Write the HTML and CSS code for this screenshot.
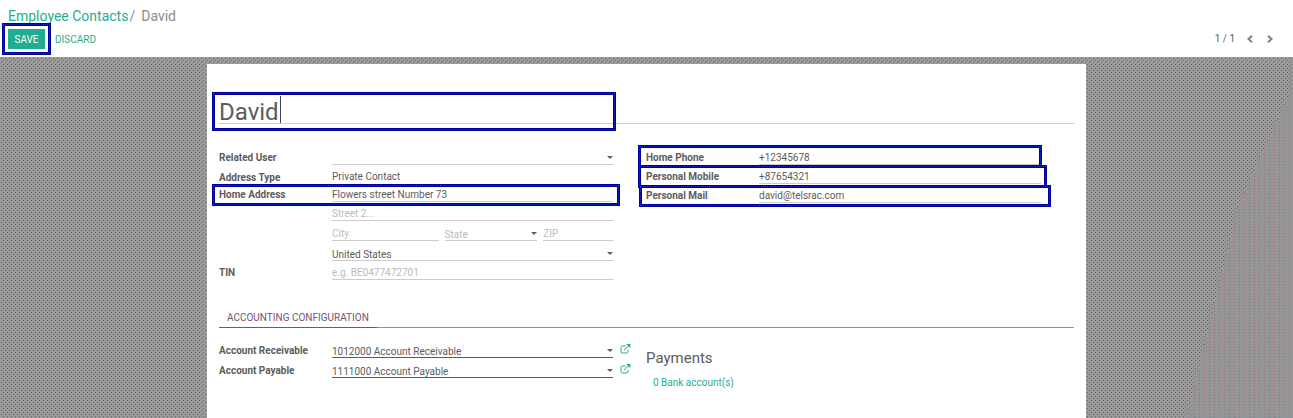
FILE: index.html
```html
<!DOCTYPE html>
<html lang="en">
<head>
<meta charset="utf-8">
<meta name="viewport" content="width=device-width, initial-scale=1">
<title>David - Employee Contacts</title>
<link rel="stylesheet" href="styles.css">
</head>
<body>
<header class="control-panel">
  <nav class="breadcrumb"><a href="#">Employee Contacts</a><span class="sep">/</span><span>David</span></nav>
  <div class="toolbar">
    <div class="actions">
      <div class="save-wrap"><button class="btn btn-save" type="button">SAVE</button><span class="mark mark-save"></span></div>
      <button class="btn btn-discard" type="button">DISCARD</button>
    </div>
    <div class="pager">
      <span>1 / 1</span>
      <button type="button" aria-label="Previous"><svg width="6" height="8" viewBox="0 0 6 8"><path d="M5 .8 1.5 4 5 7.2"/></svg></button>
      <button type="button" aria-label="Next"><svg width="6" height="8" viewBox="0 0 6 8"><path d="M1 .8 4.5 4 1 7.2"/></svg></button>
    </div>
  </div>
</header>
<main class="canvas">
  <form class="sheet">
    <div class="name">
      <input class="name-input" aria-label="Name" value="David">
      <span class="cursor"></span>
      <span class="mark mark-name"></span>
    </div>
    <div class="columns">
      <div class="group">
        <div class="row"><label for="user">Related User</label><span class="pick"><select id="user" class="field"><option></option></select></span></div>
        <div class="row"><span class="label">Address Type</span><span class="field readonly">Private Contact</span></div>
        <div class="row row-tight"><label for="street">Home Address</label><input id="street" class="field" value="Flowers street Number 73"><span class="mark mark-address"></span></div>
        <div class="row row-short"><input class="field value" aria-label="Street 2" placeholder="Street 2..."></div>
        <div class="row"><div class="city value">
          <input class="field" aria-label="City" placeholder="City">
          <span class="pick"><select class="field empty" aria-label="State"><option>State</option></select></span>
          <input class="field" aria-label="ZIP" placeholder="ZIP">
        </div></div>
        <div class="row"><span class="pick value"><select class="field" aria-label="Country"><option>United States</option></select></span></div>
        <div class="row row-short"><label for="tin">TIN</label><input id="tin" class="field" placeholder="e.g. BE0477472701"></div>
      </div>
      <div class="group">
        <div class="row"><label for="phone">Home Phone</label><input id="phone" class="field" value="+12345678"><span class="mark mark-phone"></span></div>
        <div class="row row-short"><label for="mobile">Personal Mobile</label><input id="mobile" class="field" value="+87654321"><span class="mark mark-mobile"></span></div>
        <div class="row row-short"><label for="mail">Personal Mail</label><input id="mail" class="field" value="david@telsrac.com"><span class="mark mark-mail"></span></div>
      </div>
    </div>
    <div class="tabs"><a class="tab" href="#">ACCOUNTING CONFIGURATION</a></div>
    <div class="columns accounts">
      <div class="group">
        <div class="row"><label for="recv">Account Receivable</label><span class="pick strong"><select id="recv" class="field"><option>1012000 Account Receivable</option></select></span>
          <button class="open" type="button" aria-label="Open receivable account"><svg width="11" height="10" viewBox="0 0 11 10"><path d="M5.5 2H2.2Q1 2 1 3.2v4.6Q1 9 2.2 9h4.6Q8 9 8 7.8V5.8M4 6l5-4.6"/><path class="head" d="M6.2 0h4.2v4.2z"/></svg></button></div>
        <div class="row"><label for="pay">Account Payable</label><span class="pick strong"><select id="pay" class="field"><option>1111000 Account Payable</option></select></span>
          <button class="open" type="button" aria-label="Open payable account"><svg width="11" height="10" viewBox="0 0 11 10"><path d="M5.5 2H2.2Q1 2 1 3.2v4.6Q1 9 2.2 9h4.6Q8 9 8 7.8V5.8M4 6l5-4.6"/><path class="head" d="M6.2 0h4.2v4.2z"/></svg></button></div>
      </div>
      <section class="payments"><h2>Payments</h2><a href="#">0 Bank account(s)</a></section>
    </div>
  </form>
</main>
</body>
</html>
```
FILE: styles.css
```css
* { box-sizing: border-box; }
body {
  margin: 0;
  min-height: 100vh;
  display: flex;
  flex-direction: column;
  font: 10px/14px Roboto, "Liberation Sans", sans-serif;
  color: #5c5c5c;
  background: #fff;
}
a { color: #1fae91; text-decoration: none; }
button, input, select { font: inherit; color: inherit; margin: 0; padding: 0; border: 0; border-radius: 0; background: none; }

.control-panel { padding: 8px 18px 8px 8px; }
.breadcrumb { font-size: 14px; line-height: 16px; color: #8c8c8c; }
.breadcrumb .sep { margin: 0 6px 0 1px; }
.toolbar { display: flex; justify-content: space-between; align-items: center; margin-top: 5px; }
.actions { display: flex; align-items: center; gap: 10px; }
.save-wrap { position: relative; }
.btn { display: block; height: 20px; padding-top: 1px; }
.btn-save { width: 37px; color: #fff; background: #1fae91; }
.btn-discard { color: #1fae91; }
.pager { display: flex; align-items: center; gap: 10px; }
.pager button { display: flex; width: 10px; justify-content: center; }
.pager svg { fill: none; stroke: #808080; stroke-width: 2; }

.canvas {
  position: relative;
  flex: 1;
  display: flex;
  justify-content: center;
  padding-top: 7px;
  background:
    conic-gradient(from 90deg at 3px 3px, #666 90deg, transparent 0) 0 0 / 4px 4px,
    conic-gradient(from 90deg at 3px 3px, #666 90deg, transparent 0) 2px 2px / 4px 4px,
    #999;
}
.canvas::after {
  content: "";
  position: absolute;
  right: 0;
  bottom: 0;
  width: 108px;
  height: 100%;
  clip-path: polygon(100% 8%, 50% 40%, 0 100%, 100% 100%);
  background:
    conic-gradient(from 90deg at 4px 2px, #a86a6a 90deg, transparent 0) 0 0 / 5px 3px,
    conic-gradient(from 90deg at 3px 3px, #6f9f9f 90deg, transparent 0) 2px 1px / 4px 4px,
    #969696;
}
.sheet { position: relative; z-index: 1; width: 100%; max-width: 879px; padding: 32px 12px; background: #fff; }

.name { position: relative; border-bottom: 1px solid #ccc; }
.name-input { display: block; width: 100%; height: 27px; padding-top: 4px; font-size: 24px; line-height: 23px; outline: 0; }
.cursor { position: absolute; left: 61px; top: 0; width: 1px; height: 27px; background: #444; }

.columns { display: grid; grid-template-columns: 427fr 428fr; margin-top: 21px; }
.row {
  position: relative;
  display: grid;
  grid-template-columns: 113px 1fr 33px;
  align-items: end;
  height: 20px;
}
.row-short { height: 19px; }
.row-tight { height: 17px; }
.value { grid-column: 2; }
label, .label { font-weight: 700; }
.field { display: block; width: 100%; height: 15px; border-bottom: 1px solid #ccc; outline: 0; appearance: none; }
select.field { padding-top: 2px; }
.readonly { border-color: transparent; }
.field::placeholder, .empty { color: #bbb; opacity: 1; }
.pick { position: relative; display: block; }
.pick::after {
  content: "";
  position: absolute;
  right: 0;
  top: 6px;
  border: 3px solid transparent;
  border-top-color: #5c5c5c;
  border-bottom: 0;
  pointer-events: none;
}
.strong .field { border-color: #5c5c5c; }
.city { display: grid; grid-template-columns: 107fr 93fr 70fr; gap: 6px; }

.tabs { display: flex; margin-top: 31px; border-bottom: 1px solid #909090; }
.tab { padding: 0 8px 2px; margin-bottom: -1px; color: #77527a; border-bottom: 1px solid #77527a; }
.accounts { margin-top: 10px; }
.open { display: flex; margin-left: 7px; padding-bottom: 4px; }
.open svg { fill: none; stroke: #1fae91; stroke-width: 1; }
.open .head { fill: #1fae91; stroke: none; }
.payments h2 { margin: 11px 0 9px; font-size: 15px; line-height: 18px; font-weight: 400; }
.payments a { margin-left: 7px; }

.mark { position: absolute; z-index: 1; border: 3px solid #0000a0; pointer-events: none; }
.mark::after { content: ""; position: absolute; inset: -2px; border: 1px dotted #1432c8; }
.mark-save { inset: -6px; }
.mark-name { left: -7px; top: -4px; bottom: -8px; width: 404px; }
.mark-address { left: -7px; right: 26px; top: -1px; bottom: -4px; }
.mark-phone { left: -8px; right: 32px; top: 0; bottom: -3px; }
.mark-mobile { left: -8px; right: 27px; top: 0; bottom: -4px; }
.mark-mail { left: -7px; right: 23px; top: 1px; bottom: -4px; }
```
